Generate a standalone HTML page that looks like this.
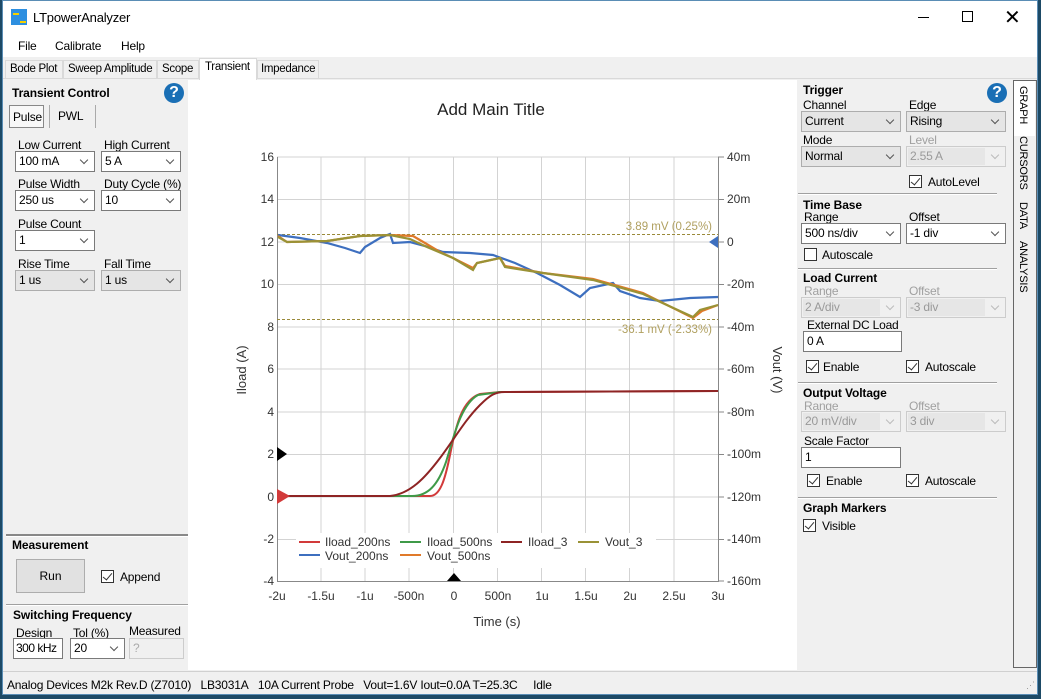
<!DOCTYPE html>
<html><head><meta charset="utf-8"><style>
*{box-sizing:border-box;margin:0;padding:0}
body{width:1041px;height:699px;background:#1d4a66;font-family:"Liberation Sans",sans-serif;font-size:12px;color:#000;position:relative;overflow:hidden;white-space:nowrap}
.a{position:absolute}
.win{left:2px;top:0;width:1036px;height:695px;background:#f0f0f0;border:1px solid #5a8db5}
.sel{position:absolute;height:21px;border:1px solid #7a7a7a;background:#fff;padding:2px 3px;font-size:12px;letter-spacing:-0.2px}
.sel.g{background:#e5e5e5;border-color:#adadad}
.sel.d{background:#f0f0f0;border-color:#ccc;color:#999}
.sel.d::before{content:"";position:absolute;left:1px;top:1px;right:20px;bottom:1px;background:#e6e6e6;z-index:0}
.sel span{position:relative}
.sel::after{content:"";position:absolute;right:7px;top:5px;width:5px;height:5px;border-right:1px solid #555;border-bottom:1px solid #555;transform:rotate(45deg)}
.sel.d::after{border-color:#bbb}
.inp{position:absolute;height:21px;border:1px solid #7a7a7a;background:#fff;padding:2px 3px;letter-spacing:-0.2px}
.lb{position:absolute;font-size:12px;letter-spacing:-0.2px}
.lb.dis{color:#a0a0a0}
.h{position:absolute;font-weight:bold;font-size:12px;letter-spacing:-0.1px}
.cb{position:absolute;width:13px;height:13px;border:1px solid #333;background:#fff}
.cb.on::after{content:"";position:absolute;left:3px;top:0px;width:4px;height:8px;border-right:1.5px solid #333;border-bottom:1.5px solid #333;transform:rotate(40deg)}
.sep{position:absolute;height:2px;border-top:1px solid #a0a0a0;border-bottom:1px solid #fff}
.help{position:absolute;width:20px;height:20px;border-radius:50%;background:#1a6fb5;color:#fff;font-weight:bold;font-size:16px;text-align:center;line-height:20px}
.tb{position:absolute;font-size:11.5px;letter-spacing:-0.3px}
.vt{position:absolute;writing-mode:vertical-rl;font-size:11px;letter-spacing:-0.2px}
</style></head><body>
<div class="a win"></div>
<div class="a" style="left:3px;top:1px;width:1034px;height:33px;background:#fff"></div>
<div class="a" style="left:11px;top:9px;width:16px;height:16px;background:#2d8fe0"></div>
<div class="a" style="left:13px;top:13px;width:6px;height:2px;background:#f5d000"></div>
<div class="a" style="left:20px;top:21px;width:6px;height:2px;background:#f5d000"></div>
<div class="lb" style="left:33px;top:10px;font-size:13px">LTpowerAnalyzer</div>
<div class="a" style="left:918px;top:17px;width:11px;height:1px;background:#000"></div>
<div class="a" style="left:962px;top:11px;width:11px;height:11px;border:1px solid #000"></div>
<div class="lb" style="left:1004px;top:5px;font-size:20px">✕</div>
<div class="a" style="left:3px;top:34px;width:1034px;height:23px;background:#fff"></div>
<div class="lb" style="left:18px;top:39px">File</div>
<div class="lb" style="left:55px;top:39px">Calibrate</div>
<div class="lb" style="left:121px;top:39px">Help</div>
<div class="a" style="left:3px;top:57px;width:1034px;height:22px;background:#f0f0f0;border-bottom:1px solid #d9d9d9"></div>
<div class="a" style="left:5px;top:60px;width:58px;height:19px;border:1px solid #d9d9d9"></div><div class="tb" style="left:10px;top:63px">Bode Plot</div>
<div class="a" style="left:63px;top:60px;width:94px;height:19px;border:1px solid #d9d9d9"></div><div class="tb" style="left:68px;top:63px">Sweep Amplitude</div>
<div class="a" style="left:157px;top:60px;width:42px;height:19px;border:1px solid #d9d9d9"></div><div class="tb" style="left:162px;top:63px">Scope</div>
<div class="a" style="left:199px;top:58px;width:58px;height:22px;border:1px solid #d9d9d9;border-bottom:none;background:#fff"></div><div class="tb" style="left:205px;top:61px">Transient</div>
<div class="a" style="left:257px;top:60px;width:62px;height:19px;border:1px solid #d9d9d9"></div><div class="tb" style="left:261px;top:63px">Impedance</div>
<div class="a" style="left:6px;top:80px;width:182px;height:590px;background:#f0f0f0"></div>
<div class="h" style="left:12px;top:86px">Transient Control</div>
<div class="help" style="left:164px;top:83px">?</div>
<div class="a" style="left:9px;top:105px;width:35px;height:23px;border:1px solid #888;background:#f8f8f8"></div>
<div class="lb" style="left:13px;top:110px">Pulse</div>
<div class="lb" style="left:58px;top:109px">PWL</div>
<div class="a" style="left:49px;top:105px;width:1px;height:23px;background:#aaa"></div>
<div class="a" style="left:95px;top:105px;width:1px;height:23px;background:#aaa"></div>
<div class="lb" style="left:18px;top:138px">Low Current</div><div class="lb" style="left:104px;top:138px">High Current</div>
<div class="sel" style="left:15px;top:151px;width:80px"><span>100 mA</span></div>
<div class="sel" style="left:101px;top:151px;width:80px"><span>5 A</span></div>
<div class="lb" style="left:18px;top:177px">Pulse Width</div><div class="lb" style="left:104px;top:177px">Duty Cycle (%)</div>
<div class="sel" style="left:15px;top:190px;width:80px"><span>250 us</span></div>
<div class="sel" style="left:101px;top:190px;width:80px"><span>10</span></div>
<div class="lb" style="left:18px;top:217px">Pulse Count</div>
<div class="sel" style="left:15px;top:230px;width:80px"><span>1</span></div>
<div class="lb" style="left:18px;top:257px">Rise Time</div><div class="lb" style="left:104px;top:257px">Fall Time</div>
<div class="sel g" style="left:15px;top:270px;width:80px"><span>1 us</span></div>
<div class="sel g" style="left:101px;top:270px;width:80px"><span>1 us</span></div>
<div class="sep" style="left:6px;top:534px;width:182px;border-top:2px solid #888"></div>
<div class="h" style="left:12px;top:538px">Measurement</div>
<div class="a" style="left:16px;top:559px;width:69px;height:34px;border:1px solid #adadad;background:#e1e1e1;text-align:center;line-height:32px">Run</div>
<div class="cb on" style="left:101px;top:570px"></div><div class="lb" style="left:120px;top:570px">Append</div>
<div class="sep" style="left:6px;top:604px;width:182px"></div>
<div class="h" style="left:13px;top:608px">Switching Frequency</div>
<div class="lb" style="left:16px;top:626px">Design</div><div class="lb" style="left:73px;top:626px">Tol (%)</div><div class="lb" style="left:129px;top:624px">Measured</div>
<div class="inp" style="left:13px;top:638px;width:50px;padding:2px 2px;letter-spacing:-0.5px">300 kHz</div>
<div class="sel" style="left:70px;top:638px;width:55px"><span>20</span></div>
<div class="inp" style="left:129px;top:638px;width:55px;border-color:#ccc;background:#f0f0f0;color:#aaa">?</div>
<div class="a" style="left:188px;top:80px;width:609px;height:590px;background:#fff"></div>
<svg class="a" style="left:188px;top:80px" width="609" height="590" viewBox="188 80 609 590" font-family="Liberation Sans, sans-serif" font-size="12">
<g stroke="#d3d3d3" stroke-width="1">
<line x1="277" y1="157" x2="718" y2="157"/><line x1="277" y1="199.5" x2="718" y2="199.5"/><line x1="277" y1="242" x2="718" y2="242"/><line x1="277" y1="284.5" x2="718" y2="284.5"/><line x1="277" y1="327" x2="718" y2="327"/><line x1="277" y1="369" x2="718" y2="369"/><line x1="277" y1="412" x2="718" y2="412"/><line x1="277" y1="454.5" x2="718" y2="454.5"/><line x1="277" y1="497" x2="718" y2="497"/><line x1="277" y1="539.5" x2="718" y2="539.5"/>
<line x1="321" y1="157" x2="321" y2="581"/><line x1="365" y1="157" x2="365" y2="581"/><line x1="409" y1="157" x2="409" y2="581"/><line x1="453.5" y1="157" x2="453.5" y2="581"/><line x1="497.5" y1="157" x2="497.5" y2="581"/><line x1="541.5" y1="157" x2="541.5" y2="581"/><line x1="585.5" y1="157" x2="585.5" y2="581"/><line x1="629.5" y1="157" x2="629.5" y2="581"/><line x1="674" y1="157" x2="674" y2="581"/>
</g>
<g stroke="#888"><line x1="277.5" y1="157" x2="277.5" y2="582"/><line x1="718.5" y1="157" x2="718.5" y2="582"/><line x1="277" y1="581.5" x2="718" y2="581.5"/></g>
<g stroke="#888"><line x1="718" y1="157" x2="724" y2="157"/><line x1="718" y1="199.5" x2="724" y2="199.5"/><line x1="718" y1="242" x2="724" y2="242"/><line x1="718" y1="284.5" x2="724" y2="284.5"/><line x1="718" y1="327" x2="724" y2="327"/><line x1="718" y1="369" x2="724" y2="369"/><line x1="718" y1="412" x2="724" y2="412"/><line x1="718" y1="454.5" x2="724" y2="454.5"/><line x1="718" y1="497" x2="724" y2="497"/><line x1="718" y1="539.5" x2="724" y2="539.5"/><line x1="718" y1="581" x2="724" y2="581"/></g>
<rect x="296" y="533" width="360" height="35" fill="#fff"/>
<g fill="#333" text-anchor="end">
<text x="274" y="161">16</text><text x="274" y="203">14</text><text x="274" y="246">12</text><text x="274" y="288">10</text><text x="274" y="331">8</text><text x="274" y="373">6</text><text x="274" y="416">4</text><text x="274" y="458">2</text><text x="274" y="501">0</text><text x="274" y="543">-2</text><text x="274" y="585">-4</text>
</g>
<g fill="#333">
<text x="727" y="161">40m</text><text x="727" y="203">20m</text><text x="727" y="246">0</text><text x="727" y="288">-20m</text><text x="727" y="331">-40m</text><text x="727" y="373">-60m</text><text x="727" y="416">-80m</text><text x="727" y="458">-100m</text><text x="727" y="501">-120m</text><text x="727" y="543">-140m</text><text x="727" y="585">-160m</text>
</g>
<g fill="#333" text-anchor="middle">
<text x="277" y="600">-2u</text><text x="321" y="600">-1.5u</text><text x="365" y="600">-1u</text><text x="409" y="600">-500n</text><text x="454" y="600">0</text><text x="498" y="600">500n</text><text x="542" y="600">1u</text><text x="586" y="600">1.5u</text><text x="630" y="600">2u</text><text x="674" y="600">2.5u</text><text x="718" y="600">3u</text>
<text x="497" y="626" font-size="13">Time (s)</text>
<text x="491" y="115" font-size="17" fill="#222">Add Main Title</text>
</g>
<text transform="translate(246,370) rotate(-90)" text-anchor="middle" font-size="13" fill="#333">Iload (A)</text>
<text transform="translate(773,370) rotate(90)" text-anchor="middle" font-size="13" fill="#333">Vout (V)</text>
<g stroke="#9a8a3a" stroke-dasharray="3,2" stroke-width="1"><line x1="277" y1="234.5" x2="718" y2="234.5"/><line x1="277" y1="319.5" x2="718" y2="319.5"/></g>
<text x="712" y="230" text-anchor="end" fill="#b0a060" font-size="11.5">3.89 mV (0.25%)</text>
<text x="712" y="333" text-anchor="end" fill="#b0a060" font-size="11.5">-36.1 mV (-2.33%)</text>
<polyline fill="none" stroke="#3d6fbf" stroke-width="2.2" points="278,235 300,238 327,243 345,248 360,253 365,247 380,238 390,234 393,243 410,242 425,246 443,252 470,253 493,255 515,263 537,273 560,285 580,297 590,288 613,283 620,291 640,298 660,301 690,298 718,297"/>
<polyline fill="none" stroke="#e07a2a" stroke-width="2.2" points="278,236 287,242 327,241 360,236 390,235 413,236 425,243 440,252 453,258 473,268 477,263 500,258 505,266 543,273 593,279 643,293 693,318 702,311 718,305"/>
<polyline fill="none" stroke="#9a9236" stroke-width="2.2" points="278,237 287,242 327,241 360,236 390,235 410,239 427,247 453,258 473,270 477,263 500,258 505,267 543,273 593,280 643,294 693,317 700,310 718,305"/>
<path fill="none" stroke="#d23a3a" stroke-width="2" d="M277,496 L430,496 C440,496 445,480 450,455 C456,425 462,400 480,394 L500,392 L718,391"/>
<path fill="none" stroke="#3f9a48" stroke-width="2" d="M277,496 L412,496 C428,496 438,485 446,462 C453,440 460,405 478,395 L500,392 L510,392"/>
<path fill="none" stroke="#8e2424" stroke-width="2" d="M277,496 L390,496 C410,494 425,478 440,458 C455,438 465,420 480,405 C490,395 495,392 505,392 L718,391"/>
<polygon points="277,447 287,454 277,461" fill="#000"/>
<polygon points="277,489 290,496 277,504" fill="#d23a3a"/>
<polygon points="447,581 454,573 461,581" fill="#000"/>
<polygon points="709,242 718,236 718,248" fill="#3d6fbf"/>
<g stroke-width="2"><line x1="299" y1="542" x2="320" y2="542" stroke="#d23a3a"/><line x1="400" y1="542" x2="421" y2="542" stroke="#3f9a48"/><line x1="501" y1="542" x2="522" y2="542" stroke="#8e2424"/><line x1="578" y1="542" x2="599" y2="542" stroke="#9a9236"/><line x1="299" y1="555" x2="320" y2="555" stroke="#3d6fbf"/><line x1="400" y1="555" x2="421" y2="555" stroke="#e07a2a"/></g>
<g fill="#333"><text x="325" y="546">Iload_200ns</text><text x="427" y="546">Iload_500ns</text><text x="528" y="546">Iload_3</text><text x="605" y="546">Vout_3</text><text x="325" y="560">Vout_200ns</text><text x="427" y="560">Vout_500ns</text></g>
</svg>
<div class="h" style="left:803px;top:83px">Trigger</div>
<div class="help" style="left:987px;top:83px">?</div>
<div class="lb" style="left:803px;top:98px">Channel</div><div class="lb" style="left:909px;top:98px">Edge</div>
<div class="sel g" style="left:801px;top:111px;width:100px"><span>Current</span></div>
<div class="sel g" style="left:906px;top:111px;width:100px"><span>Rising</span></div>
<div class="lb" style="left:803px;top:133px">Mode</div><div class="lb dis" style="left:909px;top:133px">Level</div>
<div class="sel g" style="left:801px;top:146px;width:100px"><span>Normal</span></div>
<div class="sel d" style="left:906px;top:146px;width:100px"><span>2.55 A</span></div>
<div class="cb on" style="left:909px;top:175px"></div><div class="lb" style="left:928px;top:175px">AutoLevel</div>
<div class="sep" style="left:798px;top:193px;width:199px"></div>
<div class="h" style="left:803px;top:198px">Time Base</div>
<div class="lb" style="left:804px;top:210px">Range</div><div class="lb" style="left:909px;top:210px">Offset</div>
<div class="sel" style="left:801px;top:223px;width:100px"><span>500 ns/div</span></div>
<div class="sel" style="left:906px;top:223px;width:100px"><span>-1 div</span></div>
<div class="cb" style="left:804px;top:248px"></div><div class="lb" style="left:822px;top:248px">Autoscale</div>
<div class="sep" style="left:798px;top:268px;width:199px"></div>
<div class="h" style="left:803px;top:271px">Load Current</div>
<div class="lb dis" style="left:804px;top:284px">Range</div><div class="lb dis" style="left:909px;top:284px">Offset</div>
<div class="sel d" style="left:801px;top:297px;width:100px"><span>2 A/div</span></div>
<div class="sel d" style="left:906px;top:297px;width:100px"><span>-3 div</span></div>
<div class="lb" style="left:807px;top:318px">External DC Load</div>
<div class="inp" style="left:803px;top:331px;width:99px">0 A</div>
<div class="cb on" style="left:806px;top:360px"></div><div class="lb" style="left:823px;top:360px">Enable</div>
<div class="cb on" style="left:906px;top:360px"></div><div class="lb" style="left:925px;top:360px">Autoscale</div>
<div class="sep" style="left:798px;top:382px;width:199px"></div>
<div class="h" style="left:803px;top:386px">Output Voltage</div>
<div class="lb dis" style="left:804px;top:399px">Range</div><div class="lb dis" style="left:909px;top:399px">Offset</div>
<div class="sel d" style="left:801px;top:411px;width:100px"><span>20 mV/div</span></div>
<div class="sel d" style="left:906px;top:411px;width:100px"><span>3 div</span></div>
<div class="lb" style="left:804px;top:434px">Scale Factor</div>
<div class="inp" style="left:801px;top:447px;width:100px">1</div>
<div class="cb on" style="left:807px;top:474px"></div><div class="lb" style="left:826px;top:474px">Enable</div>
<div class="cb on" style="left:906px;top:474px"></div><div class="lb" style="left:925px;top:474px">Autoscale</div>
<div class="sep" style="left:798px;top:497px;width:199px"></div>
<div class="h" style="left:803px;top:501px">Graph Markers</div>
<div class="cb on" style="left:803px;top:519px"></div><div class="lb" style="left:822px;top:519px">Visible</div>
<div class="a" style="left:1013px;top:80px;width:24px;height:588px;border:1px solid #666;background:#f0f0f0"></div>
<div class="a" style="left:1014px;top:81px;width:21px;height:55px;background:#fff"></div>
<div class="vt" style="left:1017px;top:86px">GRAPH</div>
<div class="vt" style="left:1017px;top:136px">CURSORS</div>
<div class="vt" style="left:1017px;top:202px">DATA</div>
<div class="vt" style="left:1017px;top:241px">ANALYSIS</div>
<div class="a" style="left:3px;top:671px;width:1034px;height:1px;background:#d0d0d0"></div>
<div class="lb" style="left:7px;top:678px">Analog Devices M2k Rev.D (Z7010)&nbsp;&nbsp;&nbsp;LB3031A&nbsp;&nbsp;&nbsp;10A Current Probe&nbsp;&nbsp;&nbsp;Vout=1.6V Iout=0.0A T=25.3C&nbsp;&nbsp;&nbsp;&nbsp;&nbsp;Idle</div>
<div class="lb" style="left:1026px;top:680px;color:#999;font-size:9px">⋰</div>
</body></html>
